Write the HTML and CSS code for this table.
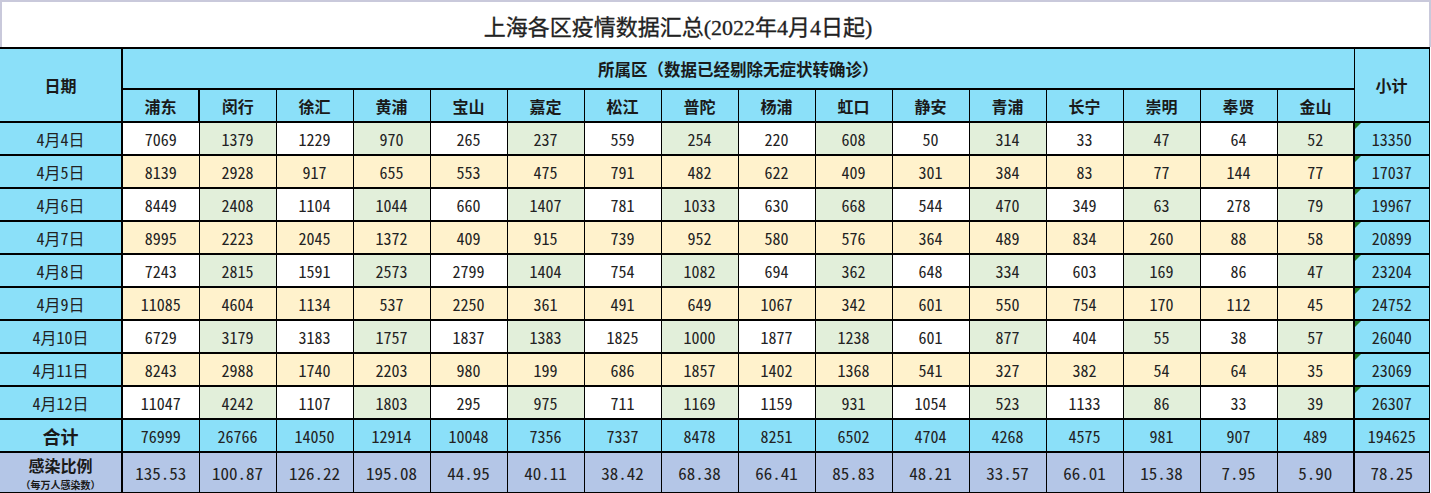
FILE: index.html
```html
<!DOCTYPE html>
<html lang="zh-CN">
<head>
<meta charset="utf-8">
<title>上海各区疫情数据汇总</title>
<link rel="stylesheet" href="styles.css">
</head>
<body>
<div class="sheet">
  <div class="title-row"><div class="title">上海各区疫情数据汇总(2022年4月4日起)</div></div>
  <table class="grid">
    <colgroup>
      <col class="c-date">
      <col class="c-d"><col class="c-d"><col class="c-d"><col class="c-d"><col class="c-d"><col class="c-d"><col class="c-d"><col class="c-d">
      <col class="c-d"><col class="c-d"><col class="c-d"><col class="c-d"><col class="c-d"><col class="c-d"><col class="c-d"><col class="c-d">
      <col class="c-sum">
    </colgroup>
    <thead>
      <tr class="h1">
        <th rowspan="2" class="hd-date">日期</th>
        <th colspan="16" class="hd-area">所属区（数据已经剔除无症状转确诊）</th>
        <th rowspan="2" class="hd-sum">小计</th>
      </tr>
      <tr class="h2">
        <th>浦东</th><th>闵行</th><th>徐汇</th><th>黄浦</th><th>宝山</th><th>嘉定</th><th>松江</th><th>普陀</th>
        <th>杨浦</th><th>虹口</th><th>静安</th><th>青浦</th><th>长宁</th><th>崇明</th><th>奉贤</th><th>金山</th>
      </tr>
    </thead>
    <tbody>
      <tr class="r odd"><td class="dt">4月4日</td><td>7069</td><td>1379</td><td>1229</td><td>970</td><td>265</td><td>237</td><td>559</td><td>254</td><td>220</td><td>608</td><td>50</td><td>314</td><td>33</td><td>47</td><td>64</td><td>52</td><td class="sum">13350</td></tr>
      <tr class="r even"><td class="dt">4月5日</td><td>8139</td><td>2928</td><td>917</td><td>655</td><td>553</td><td>475</td><td>791</td><td>482</td><td>622</td><td>409</td><td>301</td><td>384</td><td>83</td><td>77</td><td>144</td><td>77</td><td class="sum">17037</td></tr>
      <tr class="r odd"><td class="dt">4月6日</td><td>8449</td><td>2408</td><td>1104</td><td>1044</td><td>660</td><td>1407</td><td>781</td><td>1033</td><td>630</td><td>668</td><td>544</td><td>470</td><td>349</td><td>63</td><td>278</td><td>79</td><td class="sum">19967</td></tr>
      <tr class="r even"><td class="dt">4月7日</td><td>8995</td><td>2223</td><td>2045</td><td>1372</td><td>409</td><td>915</td><td>739</td><td>952</td><td>580</td><td>576</td><td>364</td><td>489</td><td>834</td><td>260</td><td>88</td><td>58</td><td class="sum">20899</td></tr>
      <tr class="r odd"><td class="dt">4月8日</td><td>7243</td><td>2815</td><td>1591</td><td>2573</td><td>2799</td><td>1404</td><td>754</td><td>1082</td><td>694</td><td>362</td><td>648</td><td>334</td><td>603</td><td>169</td><td>86</td><td>47</td><td class="sum">23204</td></tr>
      <tr class="r even"><td class="dt">4月9日</td><td>11085</td><td>4604</td><td>1134</td><td>537</td><td>2250</td><td>361</td><td>491</td><td>649</td><td>1067</td><td>342</td><td>601</td><td>550</td><td>754</td><td>170</td><td>112</td><td>45</td><td class="sum">24752</td></tr>
      <tr class="r odd"><td class="dt">4月10日</td><td>6729</td><td>3179</td><td>3183</td><td>1757</td><td>1837</td><td>1383</td><td>1825</td><td>1000</td><td>1877</td><td>1238</td><td>601</td><td>877</td><td>404</td><td>55</td><td>38</td><td>57</td><td class="sum">26040</td></tr>
      <tr class="r even"><td class="dt">4月11日</td><td>8243</td><td>2988</td><td>1740</td><td>2203</td><td>980</td><td>199</td><td>686</td><td>1857</td><td>1402</td><td>1368</td><td>541</td><td>327</td><td>382</td><td>54</td><td>64</td><td>35</td><td class="sum">23069</td></tr>
      <tr class="r odd"><td class="dt">4月12日</td><td>11047</td><td>4242</td><td>1107</td><td>1803</td><td>295</td><td>975</td><td>711</td><td>1169</td><td>1159</td><td>931</td><td>1054</td><td>523</td><td>1133</td><td>86</td><td>33</td><td>39</td><td class="sum">26307</td></tr>
    </tbody>
    <tfoot>
      <tr class="total"><th class="ft-label">合计</th><td>76999</td><td>26766</td><td>14050</td><td>12914</td><td>10048</td><td>7356</td><td>7337</td><td>8478</td><td>8251</td><td>6502</td><td>4704</td><td>4268</td><td>4575</td><td>981</td><td>907</td><td>489</td><td>194625</td></tr>
      <tr class="ratio"><th class="ft-ratio"><span class="ratio-main">感染比例</span><span class="ratio-sub">（每万人感染数）</span></th><td>135.53</td><td>100.87</td><td>126.22</td><td>195.08</td><td>44.95</td><td>40.11</td><td>38.42</td><td>68.38</td><td>66.41</td><td>85.83</td><td>48.21</td><td>33.57</td><td>66.01</td><td>15.38</td><td>7.95</td><td>5.90</td><td>78.25</td></tr>
    </tfoot>
  </table>
</div>
</body>
</html>
```

FILE: styles.css
```css
* { box-sizing: border-box; }
html, body { margin: 0; padding: 0; background: #ffffff; }
body { font-family: "Noto Sans CJK SC", sans-serif; color: #1a1a1a; }

.sheet {
  width: 1431px;
  height: 493px;
  overflow: hidden;
  background: #ffffff;
}

.title-row {
  height: 47px;
  border-top: 2px solid #c9c9db;
  border-left: 2px solid #c9c9db;
  border-right: 2px solid #c9c9db;
  display: flex;
}
.title {
  width: 1352px;
  display: flex;
  align-items: center;
  justify-content: center;
  font-family: "Liberation Serif", "Noto Sans CJK SC", serif;
  font-size: 22px;
  color: #222;
  padding-top: 1px;
  -webkit-text-stroke: 0.3px #222;
}

.grid {
  width: 1429px;
  table-layout: fixed;
  border-collapse: collapse;
  border-top: 2px solid #000;
}
.c-date { width: 122px; }
.c-d { width: 77px; }
.c-sum { width: 75px; }

.grid th, .grid td {
  padding: 0;
  text-align: center;
  vertical-align: middle;
  border: 1px solid #000;
  border-top-width: 2px;
  border-bottom-width: 2px;
  overflow: hidden;
  white-space: nowrap;
}
.grid th:first-child, .grid td:first-child { border-left: none; border-right-width: 2px; }

.grid thead th {
  background: #8be0f9;
  font-weight: bold;
  font-size: 16px;
  color: #1a1a1a;
}
.h1 { height: 41px; }
.h2 { height: 33px; }
.hd-area { font-size: 16.5px !important; }
.hd-sum, .grid td.sum, .total td:last-child, .ratio td:last-child { border-left-width: 2px; }

.r { height: 33px; }
.grid td {
  font-family: "Noto Sans Mono CJK SC", "DejaVu Sans Mono", "Noto Sans CJK SC", monospace;
  font-size: 16px;
  color: #222;
}
.r.odd td:nth-child(odd) { background: #e2efda; }
.r.odd td:nth-child(even) { background: #ffffff; }
.r.even td { background: #fff2cc; }
.grid td.dt {
  background: #8be0f9 !important;
  font-size: 16px;
}
.grid td.sum {
  background: #8be0f9 !important;
  position: relative;
}
.grid td.sum::before {
  content: "";
  position: absolute;
  left: 0;
  top: 0;
  border-top: 6px solid #1f7a21;
  border-right: 6px solid transparent;
}

.total { height: 33px; }
.total th, .total td { background: #8be0f9; }
.ft-label { font-size: 18px; font-weight: bold; }

.ratio { height: 40px; }
.ratio th, .ratio td { background: #b4c6e7; }
.ratio td { font-size: 17px; }
.ft-ratio { line-height: normal; }
.ratio-main { display: block; font-size: 16px; line-height: normal; font-weight: bold; }
.ratio-sub { display: block; font-size: 10px; line-height: normal; font-weight: bold; }
```
